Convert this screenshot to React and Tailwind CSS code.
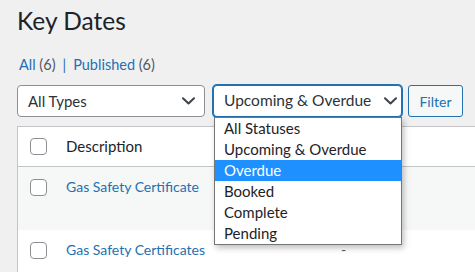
import React from 'react';

function Chevron() {
  return (
    <svg width="13" height="8" viewBox="0 0 13 8" fill="none" className="shrink-0">
      <path d="M1 1.2l5.5 5.3 5.5-5.3" stroke="#3c434a" strokeWidth="2" strokeLinecap="round" strokeLinejoin="round" />
    </svg>
  );
}

function Checkbox() {
  return <span className="block w-[17px] h-[17px] shrink-0 rounded-[4px] border border-[#8c8f94] bg-white" />;
}

const statuses = ['All Statuses', 'Upcoming & Overdue', 'Overdue', 'Booked', 'Complete', 'Pending'];

export default function App() {
  return (
    <div className="relative w-[475px] h-[272px] overflow-hidden bg-[#f0f0f1] pl-[17px] font-['Lato',sans-serif] text-[#1d2327]">
      <h1 className="mt-[5px] h-[32px] text-[24.5px] leading-[32px] font-normal">Key Dates</h1>

      {/* status links */}
      <div className="mt-[18px] h-[20px] pl-[2px] flex items-center text-[14.5px] leading-[20px]">
        <a className="text-[#2271b1]">All <span className="text-[#50575e]">(6)</span></a>
        <span className="mx-[7px] text-[#2271b1]">|</span>
        <a className="text-[#2271b1]">Published <span className="text-[#50575e]">(6)</span></a>
      </div>

      {/* filters */}
      <div className="mt-[10px] flex items-center">
        <div className="w-[188px] h-[32px] flex items-center justify-between pl-[10px] pr-[9px] bg-white border border-[#8c8f94] rounded-[4px] text-[15px] text-[#2c3338]">
          <span>All Types</span>
          <Chevron />
        </div>

        <div className="relative ml-[8px]">
          <div className="w-[189px] h-[32px] flex items-center justify-between pl-[10px] pr-[4px] bg-white border border-[#2271b1] shadow-[0_0_0_1px_#2271b1] rounded-[4px] text-[15.5px] text-[#2c3338]">
            <span className="whitespace-nowrap">Upcoming &amp; Overdue</span>
            <Chevron />
          </div>

          <ul className="absolute z-10 left-[1px] top-[32px] w-[188px] bg-white border border-[#767676] shadow-[2px_3px_6px_rgba(0,0,0,0.25)] text-[15px] text-[#1d2327]">
            {statuses.map((s) => (
              <li
                key={s}
                className={`h-[21px] leading-[21px] pl-[9px] whitespace-nowrap ${s === 'Overdue' ? 'bg-[#1e90ff] text-white' : ''}`}
              >
                {s}
              </li>
            ))}
          </ul>
        </div>

        <button className="ml-[6px] w-[55px] h-[32px] rounded-[3px] border border-[#2271b1] bg-[#f6f7f7] text-[14px] text-[#2271b1]">
          Filter
        </button>
      </div>

      {/* list table */}
      <div className="mt-[9px] w-[520px] bg-white border border-[#c3c4c7]">
        <div className="h-[40px] flex items-center pl-[12px] border-b border-[#c3c4c7]">
          <Checkbox />
          <span className="ml-[19px] text-[15px]">Description</span>
        </div>

        <div className="h-[63px] flex items-start pl-[12px] pt-[12px] bg-[#f6f7f7]">
          <Checkbox />
          <a className="ml-[19px] -mt-[2px] text-[14px] leading-[20px] text-[#2271b1]">Gas Safety Certificate</a>
        </div>

        <div className="h-[60px] flex items-start pl-[12px] pt-[12px]">
          <Checkbox />
          <a className="ml-[19px] w-[275px] -mt-[2px] text-[14px] leading-[20px] text-[#2271b1]">Gas Safety Certificates</a>
          <span className="-mt-[2px] text-[14px] leading-[20px] text-[#50575e]">-</span>
        </div>
      </div>
    </div>
  );
}
